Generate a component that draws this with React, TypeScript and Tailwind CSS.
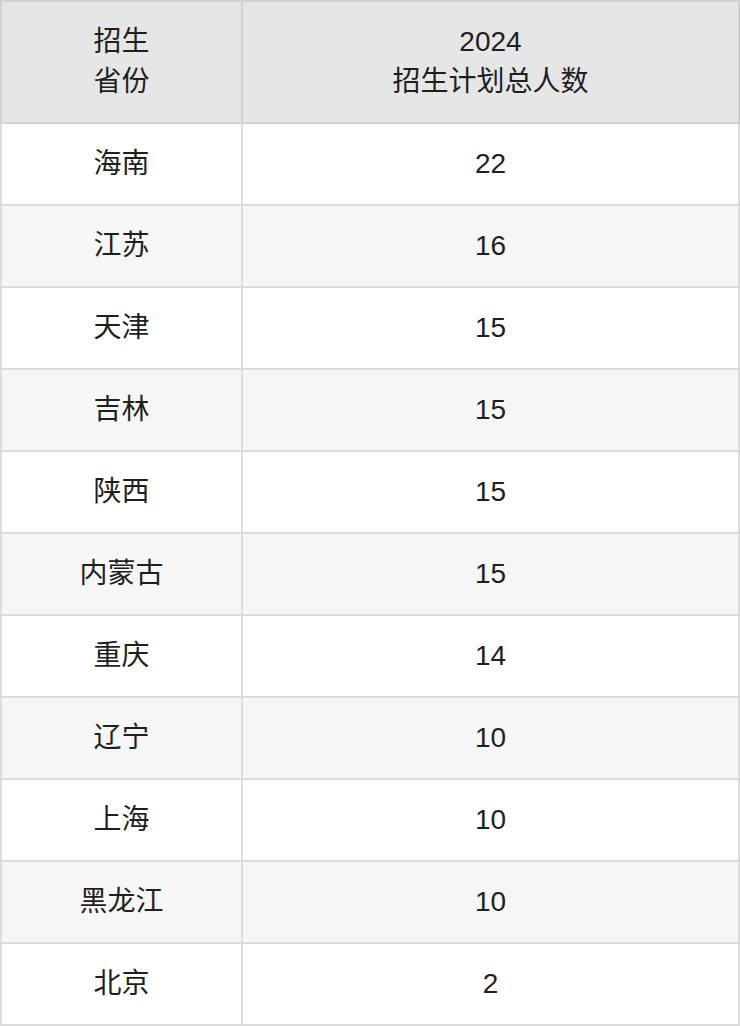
const rows: [string, string][] = [
  ["海南", "22"],
  ["江苏", "16"],
  ["天津", "15"],
  ["吉林", "15"],
  ["陕西", "15"],
  ["内蒙古", "15"],
  ["重庆", "14"],
  ["辽宁", "10"],
  ["上海", "10"],
  ["黑龙江", "10"],
  ["北京", "2"],
];

export default function App() {
  return (
    <div
      className="w-[740px] bg-white text-[28px] leading-[40px] text-[#1f1f1f]"
      style={{ fontFamily: '"Liberation Sans", "Noto Sans CJK SC", sans-serif' }}
    >
      <table className="w-full border-collapse table-fixed">
        <colgroup>
          <col className="w-[241px]" />
          <col />
        </colgroup>
        <thead>
          <tr className="h-[122px] bg-[#e6e6e6]">
            <th className="border-2 border-[#d2d2d2] font-normal text-center align-middle">
              招生
              <br />
              省份
            </th>
            <th className="border-2 border-[#d2d2d2] font-normal text-center align-middle">
              2024
              <br />
              招生计划总人数
            </th>
          </tr>
        </thead>
        <tbody>
          {rows.map(([prov, n], i) => (
            <tr key={prov} className={i % 2 === 1 ? "h-[82px] bg-[#f6f6f6]" : "h-[82px] bg-white"}>
              <td className="border-2 border-[#dcdcdc] text-center align-middle">{prov}</td>
              <td className="border-2 border-[#dcdcdc] text-center align-middle">{n}</td>
            </tr>
          ))}
        </tbody>
      </table>
    </div>
  );
}
